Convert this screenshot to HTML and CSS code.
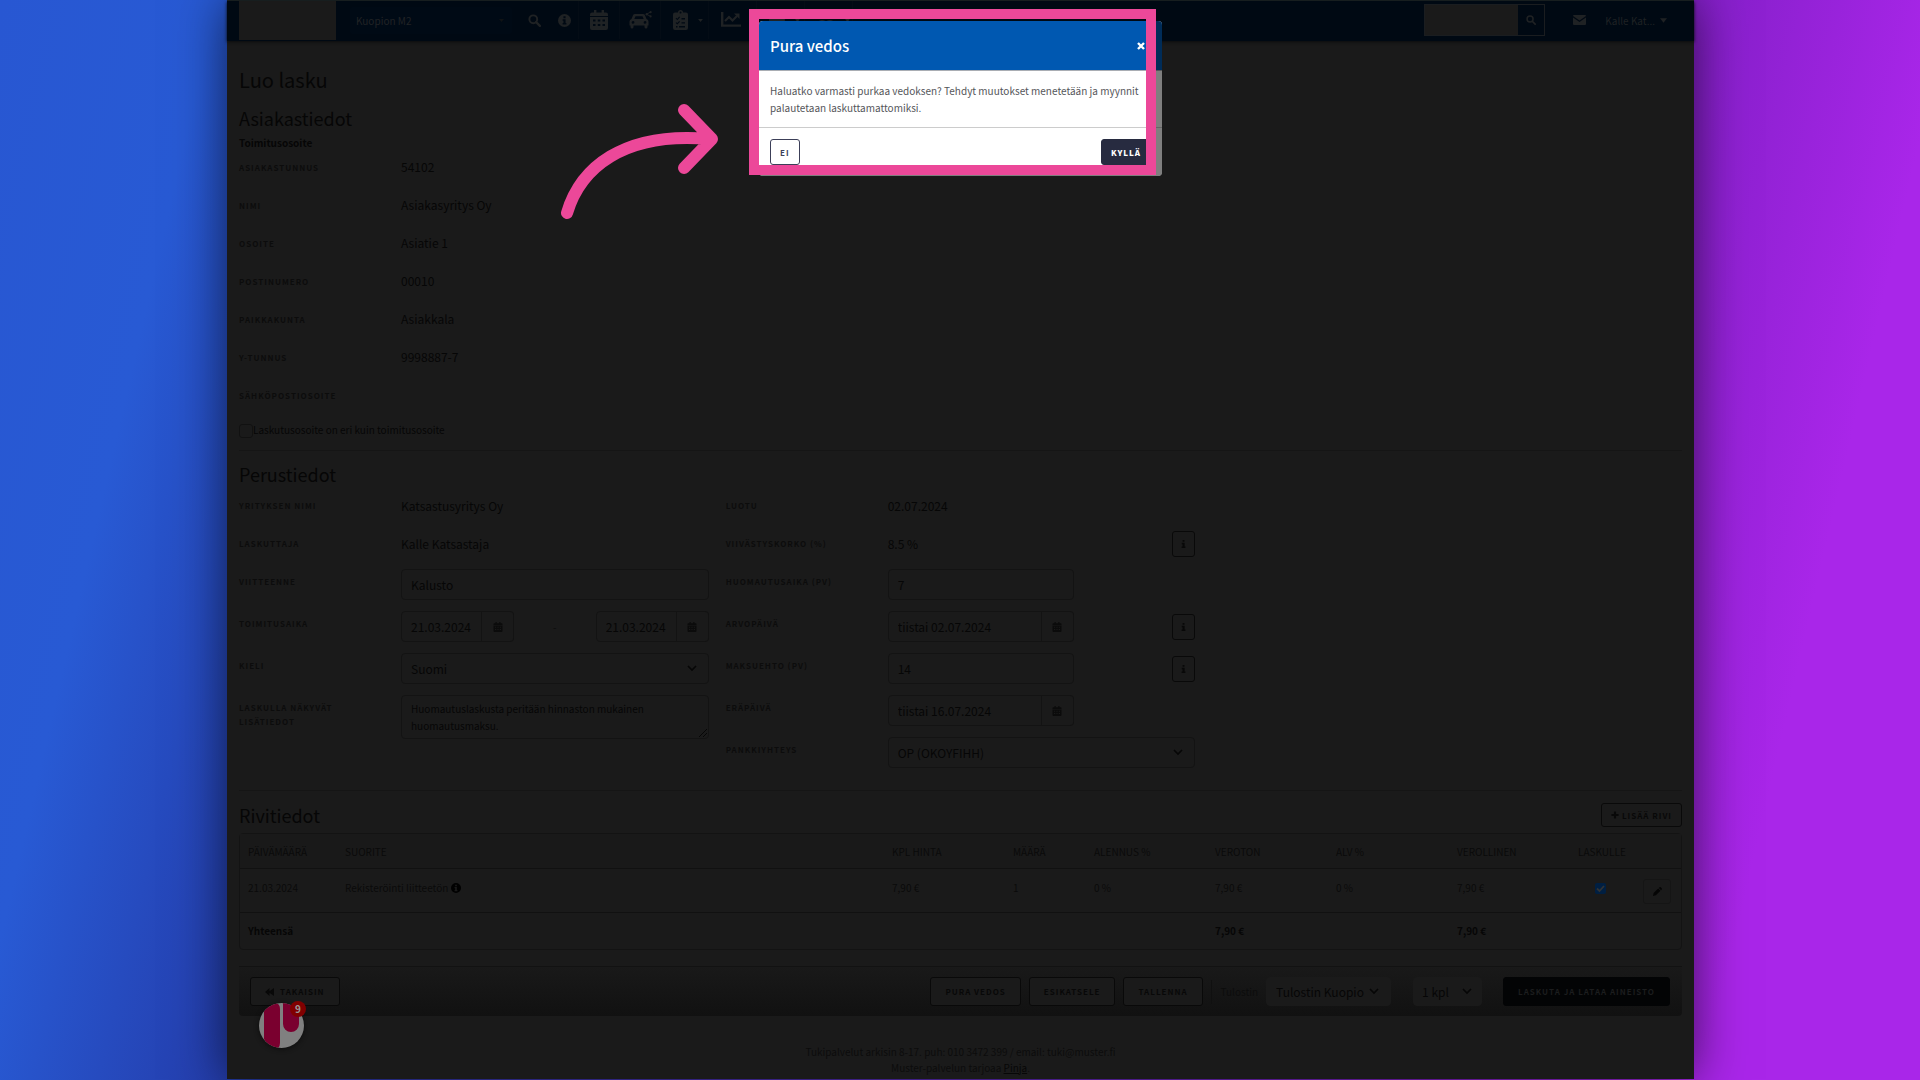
FILE: index.html
```html
<!DOCTYPE html>
<html lang="fi">
<head>
<meta charset="utf-8">
<title>Luo lasku</title>
<link rel="stylesheet" href="styles.css">
</head>
<body>
<svg class="sprite" aria-hidden="true">
  <symbol id="i-search" viewBox="0 0 16 16"><circle cx="6.5" cy="6.5" r="4.8" fill="none" stroke="currentColor" stroke-width="2.4"/><path d="M10 10l4.6 4.6" stroke="currentColor" stroke-width="2.8" stroke-linecap="round"/></symbol>
  <symbol id="i-info" viewBox="0 0 16 16"><path fill="currentColor" fill-rule="evenodd" d="M8 0a8 8 0 1 0 0 16A8 8 0 0 0 8 0zm-1.300 2.700h2.600v2.500H6.700zM5.700 6.500h3.600v4.700h1v1.800H5.700v-1.800h1V8.300h-1z"/></symbol>
  <symbol id="i-i" viewBox="0 0 10 16"><path fill="currentColor" d="M3.200 0h3.800v3.600H3.200zM1.500 5.400h5.700v7.600h1.600V16H1.300v-3h1.800V8.400H1.500z"/></symbol>
  <symbol id="i-calendar" viewBox="0 0 18 20"><path fill="currentColor" fill-rule="evenodd" d="M4 0h2.400v2.400h5.200V0H14v2.400h2q2 0 2 2V6H0V4.400q0-2 2-2h2zM0 7h18v11q0 2-2 2H2q-2 0-2-2zm3 2.500v2h2.500v-2zm4.800 0v2h2.500v-2zm4.700 0v2H15v-2zM3 14v2h2.500v-2zm4.800 0v2h2.500v-2zm4.700 0v2H15v-2z"/></symbol>
  <symbol id="i-car" viewBox="0 0 23 18"><path fill="currentColor" fill-rule="evenodd" d="M6 3h8q1.500 0 2 1.200L17.500 8q2 .5 2 2.500v4h-1V16q0 1.500-1.500 1.500T15.500 16v-1.500h-11V16q0 1.500-1.500 1.500T1.500 16v-1.500h-1v-4Q.5 8.500 2.500 8L4 4.200Q4.500 3 6 3zm.5 2.200L5.300 8h9.400l-1.200-2.800zM4 10a1.400 1.400 0 1 0 .1 2.800A1.400 1.400 0 0 0 4 10zm12 0a1.400 1.400 0 1 0 .1 2.800A1.400 1.400 0 0 0 16 10z"/><path d="M22 .8l-4.500 2.400L22 5.600" fill="none" stroke="currentColor"/><circle cx="17.800" cy="3.200" r="1.200" fill="currentColor"/><circle cx="21.600" cy="1.200" r="1.100" fill="currentColor"/><circle cx="21.600" cy="5.400" r="1.100" fill="currentColor"/></symbol>
  <symbol id="i-clip" viewBox="0 0 15 20"><path fill="currentColor" fill-rule="evenodd" d="M2 2.500h3a2.500 2.500 0 0 1 5 0h3q2 0 2 2V18q0 2-2 2H2q-2 0-2-2V4.500q0-2 2-2zM7.500 1.600a1 1 0 1 0 .1 2 1 1 0 0 0-.1-2zM2.600 8.600l1.800 1.700L7 7.300l-.8-.7-1.900 2.100-1-.9zM8.500 8v1.400H12V8zm-5.900 5l1.800 1.600L7 11.700l-.8-.7-1.900 2.100-1-.9zm5.900-.8v1.400H12v-1.400zM3 16v1.500h1.500V16zm3 0v1.500h6V16z"/></symbol>
  <symbol id="i-chart" viewBox="0 0 20 16"><path d="M1.200 0v13.600H20" fill="none" stroke="currentColor" stroke-width="2.400"/><path d="M4 9l4-4 3.500 3.500L16 4" fill="none" stroke="currentColor" stroke-width="2.200"/><path d="M13 1.500h5.500V7z" fill="currentColor"/></symbol>
  <symbol id="i-print" viewBox="0 0 18 16"><path fill="currentColor" fill-rule="evenodd" d="M3 0h12v5h1q2 0 2 2v6h-3v3H3v-3H0V7q0-2 2-2h1zm2 2v3h8V2zm0 8v4h8v-4z"/></symbol>
  <symbol id="i-users" viewBox="0 0 18 16"><path fill="currentColor" d="M5 1a3 3 0 1 1 0 6 3 3 0 0 1 0-6zm8 0a3 3 0 1 1 0 6 3 3 0 0 1 0-6zM0 14q0-6 5-6 3 0 4 2 1-2 4-2 5 0 5 6z"/></symbol>
  <symbol id="i-caret" viewBox="0 0 8 5"><path fill="currentColor" d="M0 0h8L4 5z"/></symbol>
  <symbol id="i-mail" viewBox="0 0 13 10"><path fill="currentColor" d="M1 0h11q1 0 1 1L6.500 5.500 0 1q0-1 1-1zM0 2.400l6.500 4.500L13 2.400V9q0 1-1 1H1q-1 0-1-1z"/></symbol>
  <symbol id="i-plus" viewBox="0 0 9 9"><path stroke="currentColor" stroke-width="2.400" d="M4.500 .5v8M.5 4.500h8"/></symbol>
  <symbol id="i-back" viewBox="0 0 10 9"><path fill="currentColor" d="M5 0v3.700L10 0v9L5 5.300V9L0 4.500z"/></symbol>
  <symbol id="i-pen" viewBox="0 0 10 10"><path fill="currentColor" d="M0 10l.7-3.200L5.800 1.700l2.500 2.500-5.100 5.100zM6.500 1L7.300.3q.6-.5 1.200 0l1.200 1.200q.5.600 0 1.200L9 3.500z"/></symbol>
  <symbol id="i-x" viewBox="0 0 8 8"><path d="M1 1l6 6M7 1L1 7" stroke="currentColor" stroke-width="2.400"/></symbol>
</svg>

<div class="app">
  <header class="topbar">
    <a class="logo" href="#" aria-label="Etusivu"></a>
    <select class="station" aria-label="Toimipaikka"><option>Kuopion M2</option></select>
    <nav class="nav">
      <a href="#" class="nav-item nav-search" aria-label="Haku"><svg width="13" height="13"><use href="#i-search"/></svg></a>
      <a href="#" class="nav-item nav-info" aria-label="Tiedot"><svg width="13" height="13"><use href="#i-info"/></svg></a>
      <a href="#" class="nav-item" aria-label="Kalenteri"><svg width="18" height="20"><use href="#i-calendar"/></svg></a>
      <a href="#" class="nav-item nav-car" aria-label="Ajoneuvot"><svg width="23" height="18"><use href="#i-car"/></svg></a>
      <a href="#" class="nav-item nav-wide" aria-label="Tehtävät"><svg width="15" height="20"><use href="#i-clip"/></svg><svg width="5" height="3"><use href="#i-caret"/></svg></a>
      <a href="#" class="nav-item nav-wide" aria-label="Raportit"><svg width="20" height="16"><use href="#i-chart"/></svg><svg width="5" height="3"><use href="#i-caret"/></svg></a>
      <a href="#" class="nav-item nav-wide" aria-label="Tulosteet"><svg width="16" height="14"><use href="#i-print"/></svg><svg width="5" height="3"><use href="#i-caret"/></svg></a>
      <a href="#" class="nav-item nav-wide" aria-label="Käyttäjät"><svg width="18" height="16"><use href="#i-users"/></svg><svg width="5" height="3"><use href="#i-caret"/></svg></a>
    </nav>
    <form class="find">
      <input type="text" aria-label="Hae">
      <button type="button" aria-label="Hae"><svg width="10" height="10"><use href="#i-search"/></svg></button>
    </form>
    <a class="mail" href="#" aria-label="Viestit"><svg width="13" height="10"><use href="#i-mail"/></svg></a>
    <a class="user" href="#">Kalle Kat... <svg width="7" height="5"><use href="#i-caret"/></svg></a>
  </header>

  <main class="content">
    <h1>Luo lasku</h1>

    <section class="customer">
      <h2>Asiakastiedot</h2>
      <h3>Toimitusosoite</h3>
      <dl class="facts">
        <dt>Asiakastunnus</dt><dd>54102</dd>
        <dt>Nimi</dt><dd>Asiakasyritys Oy</dd>
        <dt>Osoite</dt><dd>Asiatie 1</dd>
        <dt>Postinumero</dt><dd>00010</dd>
        <dt>Paikkakunta</dt><dd>Asiakkala</dd>
        <dt>Y-tunnus</dt><dd>9998887-7</dd>
        <dt>Sähköpostiosoite</dt><dd></dd>
      </dl>
      <label class="check"><input type="checkbox"><span>Laskutusosoite on eri kuin toimitusosoite</span></label>
    </section>

    <section class="basics">
      <h2>Perustiedot</h2>
      <div class="columns">
        <div class="fields">
          <div class="row text"><span class="label">Yrityksen nimi</span><span class="value">Katsastusyritys Oy</span></div>
          <div class="row text"><span class="label">Laskuttaja</span><span class="value">Kalle Katsastaja</span></div>
          <div class="row"><label class="label" for="ref">Viitteenne</label><input id="ref" class="control" type="text" value="Kalusto"></div>
          <div class="row"><label class="label" for="from">Toimitusaika</label>
            <div class="range">
              <span class="date short"><input id="from" class="control" type="text" value="21.03.2024"><button type="button" aria-label="Valitse päivä"><svg width="10" height="10"><use href="#i-calendar"/></svg></button></span>
              <span>-</span>
              <span class="date short"><input class="control" type="text" value="21.03.2024" aria-label="Toimitusaika päättyy"><button type="button" aria-label="Valitse päivä"><svg width="10" height="10"><use href="#i-calendar"/></svg></button></span>
            </div>
          </div>
          <div class="row"><label class="label" for="lang">Kieli</label><select id="lang" class="control"><option>Suomi</option></select></div>
          <div class="row"><label class="label" for="notes">Laskulla näkyvät lisätiedot</label><textarea id="notes" class="control">Huomautuslaskusta peritään hinnaston mukainen huomautusmaksu.</textarea></div>
        </div>
        <div class="fields">
          <div class="row text"><span class="label">Luotu</span><span class="value">02.07.2024</span></div>
          <div class="row text"><span class="label">Viivästyskorko (%)</span><span class="value split">8.5 %<button type="button" class="btn info" aria-label="Lisätietoja"><svg width="5" height="8"><use href="#i-i"/></svg></button></span></div>
          <div class="row"><label class="label" for="remind">Huomautusaika (pv)</label><input id="remind" class="control medium" type="text" value="7"></div>
          <div class="row"><label class="label" for="valued">Arvopäivä</label>
            <div class="split"><span class="date medium"><input id="valued" class="control" type="text" value="tiistai 02.07.2024"><button type="button" aria-label="Valitse päivä"><svg width="10" height="10"><use href="#i-calendar"/></svg></button></span><button type="button" class="btn info" aria-label="Lisätietoja"><svg width="5" height="8"><use href="#i-i"/></svg></button></div>
          </div>
          <div class="row"><label class="label" for="terms">Maksuehto (pv)</label>
            <div class="split"><input id="terms" class="control medium" type="text" value="14"><button type="button" class="btn info" aria-label="Lisätietoja"><svg width="5" height="8"><use href="#i-i"/></svg></button></div>
          </div>
          <div class="row"><label class="label" for="due">Eräpäivä</label><span class="date medium"><input id="due" class="control" type="text" value="tiistai 16.07.2024"><button type="button" aria-label="Valitse päivä"><svg width="10" height="10"><use href="#i-calendar"/></svg></button></span></div>
          <div class="row"><label class="label" for="bank">Pankkiyhteys</label><select id="bank" class="control"><option>OP (OKOYFIHH)</option></select></div>
        </div>
      </div>
    </section>

    <section class="lines">
      <div class="lines-head">
        <h2>Rivitiedot</h2>
        <button type="button" class="btn add"><svg width="8" height="8"><use href="#i-plus"/></svg>Lisää rivi</button>
      </div>
      <table>
        <colgroup><col class="c-date"><col><col class="c-sum"><col class="c-qty"><col class="c-sum"><col class="c-sum"><col class="c-sum"><col class="c-sum"><col class="c-tick"><col class="c-edit"></colgroup>
        <thead><tr><th>Päivämäärä</th><th>Suorite</th><th>Kpl hinta</th><th>Määrä</th><th>Alennus %</th><th>Veroton</th><th>Alv %</th><th>Verollinen</th><th>Laskulle</th><th></th></tr></thead>
        <tbody><tr><td>21.03.2024</td><td>Rekisteröinti liitteetön <svg class="dot" width="10" height="10"><use href="#i-info"/></svg></td><td>7,90 €</td><td>1</td><td>0 %</td><td>7,90 €</td><td>0 %</td><td>7,90 €</td><td class="tick"><input type="checkbox" checked aria-label="Laskulle"></td><td class="edit"><button type="button" aria-label="Muokkaa"><svg width="9" height="9"><use href="#i-pen"/></svg></button></td></tr></tbody>
        <tfoot><tr><td>Yhteensä</td><td></td><td></td><td></td><td></td><td>7,90 €</td><td></td><td>7,90 €</td><td></td><td></td></tr></tfoot>
      </table>
    </section>

    <div class="actions">
      <button type="button" class="btn back"><svg width="9" height="8"><use href="#i-back"/></svg>Takaisin</button>
      <button type="button" class="btn">Pura vedos</button>
      <button type="button" class="btn">Esikatsele</button>
      <button type="button" class="btn">Tallenna</button>
      <label class="printer" for="printer">Tulostin</label>
      <select id="printer" class="control printer-name"><option>Tulostin Kuopio</option></select>
      <select class="control copies" aria-label="Kappalemäärä"><option>1 kpl</option></select>
      <button type="button" class="btn submit">Laskuta ja lataa aineisto</button>
    </div>
  </main>

  <footer class="footer">
    <p>Tukipalvelut arkisin 8-17. puh: 010 3472 399 / email: tuki@muster.fi</p>
    <p>Muster-palvelun tarjoaa <a href="#">Pinja</a>.</p>
  </footer>

  <button type="button" class="chat" aria-label="Avaa chat">
    <svg width="45" height="45" viewBox="0 0 45 45"><clipPath id="disc"><circle cx="22.500" cy="22.500" r="22.500"/></clipPath><g clip-path="url(#disc)"><path fill="#808080" d="M0 0h45v45H0z"/><path fill="#7a002f" d="M5 7q6-7 12-7 4 1 4 6v34q0 5-4 6Q8 43 5 36zM24 0h16v21a8 8 0 0 1-16 0z"/></g></svg>
    <span>9</span>
  </button>

  <div class="dialog" role="dialog" aria-labelledby="dialog-title">
    <div class="dialog-box">
      <div class="dialog-head">
        <h2 id="dialog-title">Pura vedos</h2>
        <button type="button" aria-label="Sulje"><svg width="8" height="8"><use href="#i-x"/></svg></button>
      </div>
      <p>Haluatko varmasti purkaa vedoksen? Tehdyt muutokset menetetään ja myynnit palautetaan laskuttamattomiksi.</p>
      <div class="dialog-foot">
        <button type="button" class="no">Ei</button>
        <button type="button" class="yes">Kyllä</button>
      </div>
    </div>
    <div class="highlight"></div>
    <svg class="arrow" width="158" height="122" viewBox="0 0 158 122"><path d="M7 110C20 66 62 28 150 36M124 7l28 29-28 29" fill="none" stroke="#ec4899" stroke-width="12" stroke-linecap="round" stroke-linejoin="round"/></svg>
  </div>
</div>
</body>
</html>
```
FILE: styles.css
```css
* { box-sizing: border-box; }

:root {
  --page: #1a1a1a;
  --line: #131313;
  --ink: #060606;
  --label: #0c0c0c;
}

body {
  margin: 0;
  min-height: 100vh;
  padding: 0 226px 1px 227px;
  display: flex;
  background: linear-gradient(103deg, #2857d2 0%, #285ad4 10%, #243caa 22%, #831fc8 78%, #a926e9 90%) fixed;
  font: 10px/17px "Noto Sans CJK SC", "Open Sans", sans-serif;
  color: var(--ink);
}

h1, h2, h3, p, dl, dd { margin: 0; }
h1, h2 { font-weight: 400; }
h1 { font-size: 20px; line-height: 30px; }
h2 { font-size: 18px; line-height: 26px; }
h3 { font-size: 10px; line-height: 18px; font-weight: 700; }
a { color: inherit; text-decoration: none; }
button, input, select, textarea { font: inherit; color: inherit; margin: 0; }
button { padding: 0; background: none; border: 0; display: flex; align-items: center; justify-content: center; }
svg { display: block; flex: none; }
.sprite { position: absolute; width: 0; height: 0; }

.app {
  position: relative;
  flex: 1;
  background: var(--page);
  border-top: 1px solid #1b2224;
  box-shadow: 0 0 48px rgba(0, 0, 0, .6);
}

/* Top bar */
.topbar {
  height: 40px;
  padding: 0 27px 2px 12px;
  display: flex;
  align-items: center;
  background: #000913;
  box-shadow: 0 1px 3px #0b0c0d;
  color: #1f2224;
}
.logo { width: 97px; height: 39px; background: var(--page); align-self: flex-start; }
.station {
  appearance: none;
  width: 162px;
  height: 27px;
  margin: 0 14px;
  padding: 0 6px;
  border: 0;
  border-radius: 2px;
  color: #202325;
  background: #000a15 url("data:image/svg+xml,%3Csvg xmlns='http://www.w3.org/2000/svg' viewBox='0 0 5 3'%3E%3Cpath fill='%23101315' d='M0 0h5L2.500 3z'/%3E%3C/svg%3E") no-repeat right 8px center / 5px 3px;
}
.nav { display: flex; flex: 1; }
.nav-item {
  width: 41px;
  height: 38px;
  display: flex;
  align-items: center;
  justify-content: center;
  gap: 10px;
  border-right: 1px solid #040c15;
}
.nav-search { width: 16px; border: 0; margin-right: 16px; }
.nav-info { width: 21px; justify-content: flex-start; }
.nav-wide { width: 48px; padding-left: 12px; justify-content: flex-start; }
.find { display: flex; width: 121px; height: 32px; border: 1px solid #1a1d20; }
.find input { width: 93px; border: 0; padding: 0 6px; background: var(--page); }
.find button { flex: 1; }
.mail { margin: 0 19px 0 28px; }
.user { display: flex; align-items: center; gap: 5px; }

/* Content */
.content { padding: 24px 12px 0; }
.customer { padding-top: 10px; border-bottom: 1px solid #151515; }
.customer h3 { margin-top: 3px; }
.facts { display: grid; grid-template-columns: 162px 1fr; grid-template-rows: repeat(6, 38px) 37px; padding-top: 4px; }
.facts dt, .label {
  padding-right: 30px;
  font-size: 8px;
  line-height: 14px;
  font-weight: 700;
  letter-spacing: 1px;
  text-transform: uppercase;
  color: var(--label);
}
.facts dt { padding-top: 5px; }
.facts dd, .value { font-size: 12px; line-height: 22px; }
.check { display: flex; height: 29px; line-height: 18px; }
.check input {
  appearance: none;
  width: 14px;
  height: 14px;
  margin: 3px 0 0;
  border: 1px solid #111;
  border-radius: 3px;
}

.basics { padding: 10px 0 22px; border-bottom: 1px solid #151515; }
.columns { display: grid; grid-template-columns: repeat(3, 1fr); gap: 17px; margin-top: 8px; }
.fields { display: flex; flex-direction: column; gap: 11px; }
.row { display: grid; grid-template-columns: 162px 1fr; align-items: start; }
.row .label { padding-top: 6px; }
.row.text { height: 27px; }
.row.text + .row.text { height: 25px; }
.row.text .label { padding-top: 4px; }
.row .label[for="remind"], .row.text .label { padding-right: 0; }
.control {
  width: 100%;
  height: 31px;
  padding: 0 9px;
  font-size: 12px;
  line-height: 20px;
  background: #1a1a1a;
  border: 1px solid var(--line);
  border-radius: 4px;
  color: var(--ink);
}
select.control {
  appearance: none;
  background: #1a1a1a url("data:image/svg+xml,%3Csvg xmlns='http://www.w3.org/2000/svg' viewBox='0 0 10 7'%3E%3Cpath fill='none' stroke='%23060606' stroke-width='1.600' d='M1 1l4 4 4-4'/%3E%3C/svg%3E") no-repeat right 11px center / 10px 7px;
}
textarea.control { display: block; height: 44px; padding: 4px 9px; font-size: 10px; line-height: 17px; overflow: hidden; }
textarea::-webkit-resizer {
  background: url("data:image/svg+xml,%3Csvg xmlns='http://www.w3.org/2000/svg' viewBox='0 0 12 12'%3E%3Cpath stroke='%23060606' d='M3 11l8-8M7 11l4-4'/%3E%3C/svg%3E") no-repeat right bottom / 12px 12px;
}
.range, .split { display: flex; align-items: center; justify-content: space-between; }
.value.split { height: 22px; }
.range { color: var(--label); }
.date { display: flex; }
.date .control { border-radius: 4px 0 0 4px; }
.date button { flex: none; width: 32px; border: 1px solid var(--line); border-left: 0; border-radius: 0 4px 4px 0; color: #0b0b0b; }
.short { width: 113px; }
.short .control { padding-right: 0; }
.medium { width: 186px; }

.btn {
  height: 29px;
  padding: 0 14px;
  border: 1px solid #090909;
  border-radius: 3px;
  background: #1a1a1a;
  font-size: 8px;
  font-weight: 700;
  letter-spacing: 1px;
  text-transform: uppercase;
  color: #080808;
}
.btn.info { width: 23px; height: 26px; padding: 0; }
.btn.add { height: 24px; padding: 0 9px; gap: 3px; }

/* Invoice lines */
.lines { padding-top: 12px; }
.lines-head { display: flex; align-items: center; justify-content: space-between; height: 24px; }
table {
  width: 100%;
  margin-top: 6px;
  table-layout: fixed;
  border-collapse: separate;
  border-spacing: 0;
  border: 1px solid var(--line);
  border-radius: 4px;
  text-align: left;
}
.c-date { width: 97px; }
.c-sum { width: 121px; }
.c-qty { width: 81px; }
.c-tick { width: 61px; }
.c-edit { width: 50px; }
th, td { padding: 0 8px; font-weight: 400; white-space: nowrap; color: #0a0a0a; }
th { height: 35px; text-transform: uppercase; background: #191919; border-bottom: 1px solid #111; }
tbody td { height: 44px; padding-top: 10px; vertical-align: top; border-bottom: 1px solid #111; }
tfoot td { height: 36px; padding-bottom: 2px; font-weight: 700; color: var(--ink); }
.dot { display: inline-block; vertical-align: -1px; color: #000; }
.tick { text-align: center; }
.tick input {
  appearance: none;
  width: 11px;
  height: 11px;
  margin-top: 4px;
  border-radius: 2px;
  background: #001f42 url("data:image/svg+xml,%3Csvg xmlns='http://www.w3.org/2000/svg' viewBox='0 0 11 11'%3E%3Cpath fill='none' stroke='%23303335' stroke-width='1.800' d='M2 5.500l2.500 2.500L9 3'/%3E%3C/svg%3E") center / 11px 11px;
}
.edit { padding: 10px 10px 0 0; }
.edit button { width: 28px; height: 25px; margin-left: auto; border: 1px solid #151515; border-radius: 3px; color: #050505; }

/* Action bar */
.actions {
  display: flex;
  align-items: center;
  gap: 8px;
  height: 50px;
  margin-top: 16px;
  padding: 0 12px 0 11px;
  border-top: 1px solid #121212;
  border-radius: 0 0 4px 4px;
  background: linear-gradient(#191919, #111);
}
.back { margin-right: auto; gap: 6px; }
.printer { display: flex; align-items: center; height: 24px; padding-left: 9px; border-left: 1px solid #101010; color: var(--label); }
.actions .control { height: 29px; border-color: #1a1a1a; }
.actions .printer-name { width: 125px; margin-right: 14px; }
.actions .copies { width: 69px; margin-right: 13px; padding: 0 8px; background-position: right 9px center; }
.submit { background: #030405; border-color: #030405; color: #1c1d1e; }

.footer { padding-top: 28px; line-height: 16px; text-align: center; color: #0c0c0c; }
.footer a { text-decoration: underline; color: #070707; }

.chat { position: absolute; left: 32px; bottom: 31px; border-radius: 50%; box-shadow: 0 1px 5px #0c0c0c; }
.chat span {
  position: absolute;
  right: -2px;
  top: -2px;
  width: 16px;
  height: 16px;
  border-radius: 50%;
  background: #800000;
  color: #999;
  line-height: 16px;
  font-weight: 700;
}

/* Dialog over the page */
.dialog { position: absolute; top: 20px; left: 0; right: 0; width: 403px; margin: 0 auto; }
.dialog-box { position: relative; border-radius: 4px; overflow: hidden; background: #fff; color: #55565a; }
.dialog-box::after { content: ""; position: absolute; inset: 0; border: solid rgba(0, 0, 0, .5); border-width: 0 16px 11px 0; }
.dialog-head {
  display: flex;
  align-items: center;
  justify-content: space-between;
  height: 50px;
  padding: 0 17px 0 11px;
  border-bottom: 1px solid #a9adb3;
  background: #0058b1;
  color: #fff;
}
.dialog-head h2 { font-size: 15px; line-height: 22px; font-weight: 500; }
.dialog p { padding: 11px 16px 11px 11px; line-height: 17px; }
.dialog-foot { display: flex; justify-content: space-between; padding: 11px; border-top: 1px solid #ccc; }
.dialog-foot button { height: 26px; padding: 0 9px; border: 1px solid #3c3f58; border-radius: 3px; font-size: 8px; font-weight: 700; letter-spacing: 1px; text-transform: uppercase; color: #3c3f58; }
.dialog-foot .yes { width: 50px; justify-content: flex-start; background: #272b40; border-color: #272b40; color: #fff; font-weight: 900; }
.highlight { position: absolute; inset: -12px 6px 1px -10px; border: 10px solid #ec4899; }
.arrow { position: absolute; left: -199px; top: 82px; }
```
